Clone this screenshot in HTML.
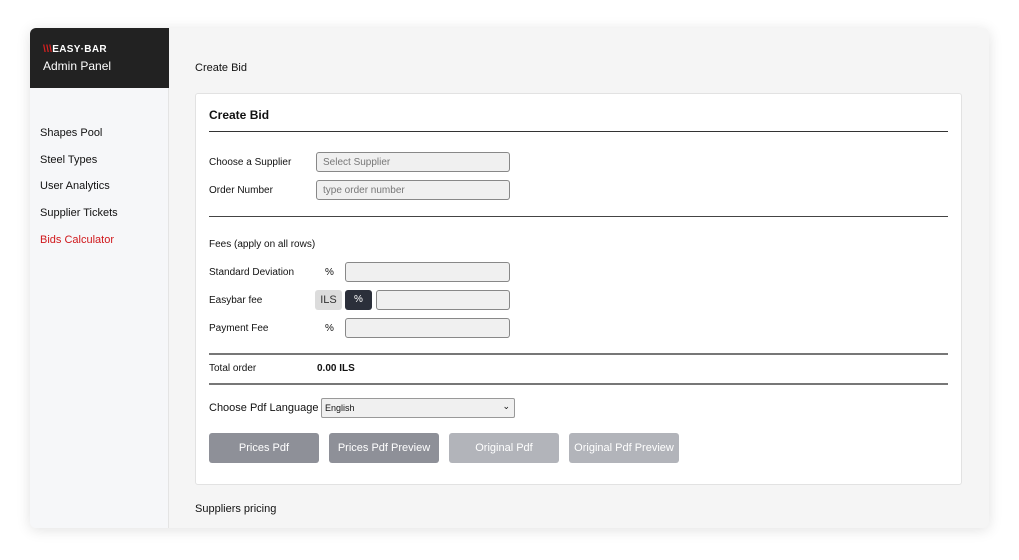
<!DOCTYPE html>
<html><head><style>
*{box-sizing:border-box;margin:0;padding:0}
body{width:1019px;height:560px;background:#fff;font-family:"Liberation Sans",Arial,sans-serif;position:relative;overflow:hidden;color:#111}
.frame{position:absolute;left:30px;top:28px;width:959px;height:500px;border-radius:6px;overflow:hidden;background:#f5f5f5;box-shadow:0 2px 14px rgba(0,0,0,.12)}
.side{position:absolute;left:0;top:0;width:139px;height:500px;background:#f6f7f9;border-right:1px solid #e4e4e4}
.head{position:absolute;left:0;top:0;width:139px;height:60px;background:#222}
.a{position:absolute;font-size:11px}
.nav{position:absolute;left:10px;font-size:11px;color:#111}
.card{position:absolute;left:165px;top:65px;width:767px;height:392px;background:#fff;border:1px solid #e2e2e2;border-radius:3px}
.hr{position:absolute;left:13px;width:739px;height:2px;background:#666}
.inp{position:absolute;height:20px;background:#f0f0f0;border:1px solid #888;border-radius:3px;font-size:10px;color:#777;padding:4px 6px}
.btn{position:absolute;top:339px;width:110px;height:30px;border-radius:3px;color:#fff;font-size:11px;text-align:center;line-height:30px}
</style></head><body>
<div class="frame">
 <div class="side">
  <div class="head">
   <div style="position:absolute;left:13px;top:16px;font-size:10px;font-weight:bold;color:#fff;letter-spacing:.3px"><span style="color:#e02020">\\\</span>EASY·BAR</div>
   <div style="position:absolute;left:13px;top:31px;font-size:12px;color:#fff">Admin Panel</div>
  </div>
  <div class="nav" style="top:99px">Shapes Pool</div>
  <div class="nav" style="top:126px">Steel Types</div>
  <div class="nav" style="top:152px">User Analytics</div>
  <div class="nav" style="top:179px">Supplier Tickets</div>
  <div class="nav" style="top:206px;color:#d0181c">Bids Calculator</div>
 </div>
 <div class="a" style="left:165px;top:34px">Create Bid</div>
 <div class="a" style="left:165px;top:475px">Suppliers pricing</div>
 <div class="card">
  <div class="a" style="left:13px;top:14px;font-size:12px;font-weight:bold">Create Bid</div>
  <div class="hr" style="top:37px;height:1px;background:#333"></div>
  <div class="a" style="left:13px;top:63px;font-size:10px">Choose a Supplier</div>
  <div class="inp" style="left:120px;top:58px;width:194px">Select Supplier</div>
  <div class="a" style="left:13px;top:91px;font-size:10px">Order Number</div>
  <div class="inp" style="left:120px;top:86px;width:194px">type order number</div>
  <div class="hr" style="top:122px;height:1px;background:#444"></div>
  <div class="a" style="left:13px;top:145px;font-size:10px">Fees (apply on all rows)</div>
  <div class="a" style="left:13px;top:173px;font-size:10px">Standard Deviation</div>
  <div class="a" style="left:129px;top:173px;font-size:10px">%</div>
  <div class="inp" style="left:149px;top:168px;width:165px"></div>
  <div class="a" style="left:13px;top:201px;font-size:10px">Easybar fee</div>
  <div style="position:absolute;left:119px;top:196px;width:27px;height:20px;background:#dcdcdc;border-radius:3px;font-size:11px;text-align:center;line-height:20px;color:#333">ILS</div>
  <div style="position:absolute;left:149px;top:196px;width:27px;height:20px;background:#2b2f3a;border-radius:3px;font-size:10px;text-align:center;line-height:20px;color:#fff">%</div>
  <div class="inp" style="left:180px;top:196px;width:134px"></div>
  <div class="a" style="left:13px;top:229px;font-size:10px">Payment Fee</div>
  <div class="a" style="left:129px;top:229px;font-size:10px">%</div>
  <div class="inp" style="left:149px;top:224px;width:165px"></div>
  <div class="hr" style="top:259px;background:#777"></div>
  <div class="a" style="left:13px;top:269px;font-size:10px">Total order</div>
  <div class="a" style="left:121px;top:269px;font-size:10px;font-weight:bold">0.00 ILS</div>
  <div class="hr" style="top:289px;background:#777"></div>
  <div class="a" style="left:13px;top:308px;font-size:11px">Choose Pdf Language</div>
  <div style="position:absolute;left:125px;top:304px;width:194px;height:20px;border:1px solid #999;background:#f0f0f0;font-size:9px;padding:4px 3px;border-radius:2px">English<span style="position:absolute;right:4px;top:2px;font-size:9px">⌄</span></div>
  <div class="btn" style="left:13px;background:#8e9098">Prices Pdf</div>
  <div class="btn" style="left:133px;background:#8e9098">Prices Pdf Preview</div>
  <div class="btn" style="left:253px;background:#b2b4ba">Original Pdf</div>
  <div class="btn" style="left:373px;background:#b2b4ba">Original Pdf Preview</div>
 </div>
</div>
</body></html>
